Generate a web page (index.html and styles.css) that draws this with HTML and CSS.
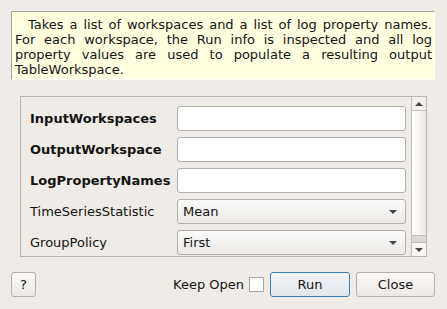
FILE: index.html
```html
<!DOCTYPE html>
<html lang="en">
<head>
    <meta charset="UTF-8">
    <title>LogPropertyTable input dialog</title>
    <link rel="stylesheet" href="styles.css">
</head>
<body>
    <div class="dialog">
        <div class="description">
            <div class="line first">Takes a list of workspaces and a list of log property names.</div>
            <div class="line">For each workspace, the Run info is inspected and all log</div>
            <div class="line">property values are used to populate a resulting output</div>
            <div class="line last">TableWorkspace.</div>
        </div>

        <div class="scroll-area">
            <div class="props">
                <div class="row">
                    <label class="name required">InputWorkspaces</label>
                    <div class="field"></div>
                </div>
                <div class="row">
                    <label class="name required">OutputWorkspace</label>
                    <div class="field"></div>
                </div>
                <div class="row">
                    <label class="name required">LogPropertyNames</label>
                    <div class="field"></div>
                </div>
                <div class="row">
                    <label class="name">TimeSeriesStatistic</label>
                    <div class="combo"><span>Mean</span><i class="arrow"></i></div>
                </div>
                <div class="row">
                    <label class="name">GroupPolicy</label>
                    <div class="combo"><span>First</span><i class="arrow"></i></div>
                </div>
            </div>
            <div class="scrollbar">
                <div class="sb-btn"><i class="up"></i></div>
                <div class="sb-handle"></div>
                <div class="sb-track"></div>
                <div class="sb-btn bottom"><i class="down"></i></div>
            </div>
        </div>

        <div class="buttons">
            <button class="btn help">?</button>
            <div class="spacer"></div>
            <span class="keep">Keep Open</span>
            <span class="check"></span>
            <button class="btn run">Run</button>
            <button class="btn close">Close</button>
        </div>
    </div>
</body>
</html>
```

FILE: styles.css
```css
html, body { margin: 0; padding: 0; }
body { background: #efebe7; font-family: "DejaVu Sans", sans-serif; font-size: 13px; color: #141414; }
.dialog { width: 447px; height: 309px; box-sizing: border-box; padding: 11px 12px 0 11px; display: flex; flex-direction: column; }

.description { background: #ffffdf; border-top: 1px solid #a6a4a0; border-left: 1px solid #a6a4a0; border-right: 1px solid #ffffff; border-bottom: 1px solid #ffffff; height: 69px; box-sizing: border-box; padding: 5px 2px 0 3px; line-height: 15px; font-size: 13px; }
.line { text-align: justify; text-align-last: justify; white-space: nowrap; }
.line.first { padding-left: 13px; }
.line.last { text-align-last: left; }

.scroll-area { margin: 16px 8px 0 9px; height: 161px; box-sizing: border-box; border: 1px solid #b9b5b0; display: flex; }
.props { flex: 1; padding: 9px 5px 0 9px; display: flex; flex-direction: column; gap: 6px; }
.row { display: flex; align-items: center; height: 25px; }
.name { width: 147px; white-space: nowrap; }
.required { font-weight: bold; }
.field { flex: 1; height: 25px; box-sizing: border-box; background: #fff; border: 1px solid #b3afaa; border-radius: 3px; }
.combo { flex: 1; height: 25px; box-sizing: border-box; border: 1px solid #b3afaa; border-radius: 3px; background: linear-gradient(#fbfbfa, #ebe9e6); display: flex; align-items: center; padding: 0 8px 0 5px; }
.combo span { flex: 1; }
.arrow { width: 0; height: 0; border-left: 4px solid transparent; border-right: 4px solid transparent; border-top: 4px solid #454545; }

.scrollbar { width: 14px; border-left: 1px solid #c2beb9; display: flex; flex-direction: column; }
.sb-btn { height: 13px; display: flex; align-items: center; justify-content: center; background: #f2f0ee; border-bottom: 1px solid #c2beb9; }
.sb-btn.bottom { border-bottom: none; border-top: 1px solid #c2beb9; background: #f8f7f6; }
.sb-handle { flex: 1; background: linear-gradient(90deg, #ffffff, #ebe8e5); }
.sb-track { height: 6px; background: #dcd8d4; border-top: 1px solid #c2beb9; }
.up { width: 0; height: 0; border-left: 4px solid transparent; border-right: 4px solid transparent; border-bottom: 4px solid #454545; }
.down { width: 0; height: 0; border-left: 4px solid transparent; border-right: 4px solid transparent; border-top: 4px solid #454545; }

.buttons { display: flex; align-items: center; margin-top: 15px; height: 25px; }
.spacer { flex: 1; }
.btn { font-family: "DejaVu Sans", sans-serif; font-size: 13px; color: #141414; height: 25px; box-sizing: border-box; border: 1px solid #b3afaa; border-radius: 3px; background: linear-gradient(#fbfaf9, #ebe8e5); padding: 0; }
.help { width: 25px; }
.keep { margin-right: 5px; }
.check { width: 13px; height: 13px; background: #fff; border: 1px solid #a9a5a0; margin-right: 6px; }
.run { width: 80px; border-color: #3c7eb4; background: linear-gradient(#f3f5f7, #e1e6eb); margin-right: 6px; }
.close { width: 79px; }
```
